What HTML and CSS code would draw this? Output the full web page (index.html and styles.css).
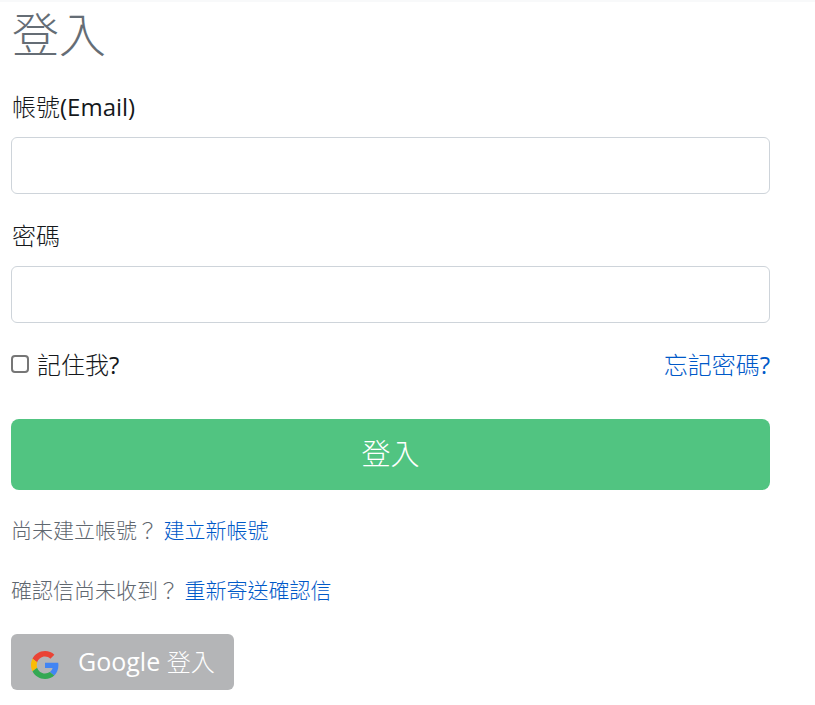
FILE: index.html
```html
<!DOCTYPE html>
<html lang="zh-Hant">
<head>
<meta charset="utf-8">
<title>登入</title>
<link rel="stylesheet" href="styles.css">
</head>
<body>
<div class="topstrip"></div>
<main class="page">
  <h1 class="title">登入</h1>
  <form class="form">
    <div class="field">
      <label class="label" for="email">帳號<span class="latin">(Email)</span></label>
      <input class="input" id="email" type="text">
    </div>
    <div class="field">
      <label class="label" for="pw">密碼</label>
      <input class="input" id="pw" type="password">
    </div>
    <div class="row">
      <label class="remember"><input class="check" type="checkbox"><span>記住我<span class="latin">?</span></span></label>
      <a class="link" href="#">忘記密碼<span class="latin">?</span></a>
    </div>
    <button class="submit" type="button">登入</button>
  </form>
  <p class="note">尚未建立帳號？ <a class="link" href="#">建立新帳號</a></p>
  <p class="note">確認信尚未收到？ <a class="link" href="#">重新寄送確認信</a></p>
  <a class="google" href="#">
    <svg class="gicon" viewBox="0 0 48 48" width="28" height="28" aria-hidden="true">
      <path fill="#EA4335" d="M24 9.5c3.54 0 6.71 1.22 9.21 3.6l6.85-6.85C35.9 2.38 30.47 0 24 0 14.62 0 6.51 5.38 2.56 13.22l7.98 6.19C12.43 13.72 17.74 9.5 24 9.5z"/>
      <path fill="#4285F4" d="M46.98 24.55c0-1.57-.15-3.09-.38-4.55H24v9.02h12.94c-.58 2.96-2.26 5.48-4.78 7.18l7.73 6c4.51-4.18 7.09-10.36 7.09-17.65z"/>
      <path fill="#FBBC05" d="M10.53 28.59c-.48-1.45-.76-2.99-.76-4.59s.27-3.14.76-4.59l-7.98-6.19C.92 16.46 0 20.12 0 24c0 3.88.92 7.54 2.56 10.78l7.97-6.19z"/>
      <path fill="#34A853" d="M24 48c6.48 0 11.93-2.13 15.89-5.81l-7.73-6c-2.15 1.45-4.92 2.3-8.16 2.3-6.26 0-11.57-4.22-13.47-9.91l-7.98 6.19C6.51 42.62 14.62 48 24 48z"/>
    </svg>
    <span class="gtext"><span class="latin gword">Google</span> <span class="gcjk">登入</span></span>
  </a>
</main>
</body>
</html>
```
FILE: styles.css
```css
* { box-sizing: border-box; }
html, body { margin: 0; padding: 0; }
body {
  background: #fff;
  color: #15181b;
  font-family: "Open Sans", "Noto Sans CJK TC", sans-serif;
  font-size: 21px;
  font-weight: 300;
  overflow: hidden;
}
.latin { font-weight: 400; color: inherit; }
.topstrip { height: 2px; background: #f8f9fa; }
.page { width: 770px; padding: 0 0 0 11px; }
.title {
  margin: 0;
  font-size: 47px;
  font-weight: 300;
  line-height: 65px;
  color: #656d75;
  padding-left: 1px;
}
.form { margin-top: 23px; }
.field { margin-bottom: 25px; }
.label {
  display: block;
  font-size: 24px;
  line-height: 34px;
  padding-left: 1px;
  margin-bottom: 13px;
}
.input {
  display: block;
  width: 100%;
  height: 57px;
  border: 1px solid #ced4da;
  border-radius: 6px;
  background: #fff;
}
.row {
  display: flex;
  justify-content: space-between;
  align-items: center;
  height: 34px;
  margin-top: -2px;
  font-size: 24px;
}
.remember { display: flex; align-items: center; gap: 8px; }
.check {
  appearance: none;
  margin: 2px 0 0;
  width: 18px;
  height: 18px;
  border: 2px solid #767676;
  border-radius: 4px;
  background: #fff;
}
.link { color: #0059c8; text-decoration: none; }
.submit {
  display: block;
  width: 100%;
  height: 71px;
  margin-top: 39px;
  padding: 0 0 6px;
  border: 0;
  border-radius: 8px;
  background: #51c481;
  color: #fff;
  font: inherit;
  font-size: 29px;
}
.note {
  margin: 24px 0 0;
  line-height: 32px;
  font-size: 21px;
  color: #5f676f;
}
.note + .note { margin-top: 28px; }
.google {
  display: inline-flex;
  align-items: center;
  gap: 19px;
  width: 223px;
  height: 56px;
  margin-top: 28px;
  padding-left: 20px;
  border-radius: 6px;
  background: #b4b5b7;
  color: #fff;
  text-decoration: none;
  font-size: 25px;
}
.gicon { margin-top: 5px; }
.gtext { margin-bottom: 3px; }
.gword { font-size: 25px; }
.gcjk { font-size: 24px; }
```
